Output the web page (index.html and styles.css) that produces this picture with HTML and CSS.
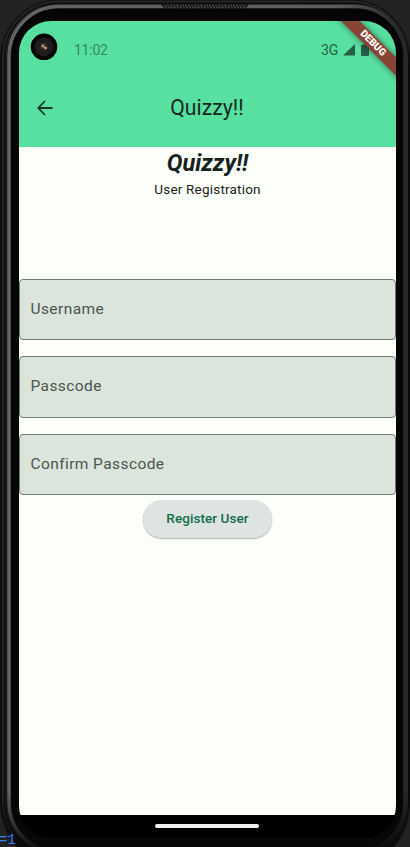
FILE: index.html
```html
<!DOCTYPE html>
<html lang="en">
<head>
<meta charset="utf-8">
<title>Quizzy!!</title>
<link rel="stylesheet" href="styles.css">
</head>
<body>
<div class="device">
  <svg class="frame" width="410" height="847" viewBox="0 0 410 847" fill="none">
    <defs>
      <linearGradient id="rim" gradientUnits="userSpaceOnUse" x1="0" y1="0" x2="398" y2="0">
        <stop offset="0" stop-color="#646464"/>
        <stop offset=".85" stop-color="#5c5c5c"/>
        <stop offset="1" stop-color="#272727"/>
      </linearGradient>
      <linearGradient id="fade" x1="0" y1="0" x2="0" y2="1">
        <stop offset="0" stop-color="#080808" stop-opacity="0"/>
        <stop offset="1" stop-color="#080808" stop-opacity=".9"/>
      </linearGradient>
    </defs>
    <rect x="0.5" y="-0.5" width="409" height="862" rx="59" fill="#080808" stroke="#111"/>
    <rect x="3" y="1.500" width="404" height="857" rx="56" stroke="#262626" stroke-width="2"/>
    <rect x="6" y="4.500" width="399" height="850" rx="52" stroke="#222" stroke-width="1.500"/>
    <rect x="9" y="6.500" width="396" height="846" rx="50" stroke="url(#rim)" stroke-width="3.500"/>
    <rect x="11.500" y="9" width="391" height="841" rx="47" fill="#050505"/>
    <path d="M1 790h408v12a59 59 0 0 1-15 45H17A59 59 0 0 1 1 802z" fill="url(#fade)"/>
    <path d="M160 3h90l-5 6h-80z" fill="#101010"/>
    <path d="M164 5.500h82M165 7.500h80" stroke="#484848" stroke-width="1.300" stroke-dasharray="2 1"/>
  </svg>
  <span class="backdrop-text">=1</span>
  <main class="screen">
    <header class="top">
      <div class="status">
        <svg class="camera" width="28" height="28" viewBox="0 0 28 28">
          <circle cx="14" cy="13.800" r="13.300" fill="#050505"/>
          <circle cx="14" cy="13.800" r="9.500" fill="#1c1c1c"/>
          <circle cx="14" cy="13.800" r="4.500" fill="#30241f"/>
          <circle cx="13" cy="13" r="1.800" fill="#a18a7c"/>
          <circle cx="15.500" cy="15" r="1.300" fill="#d9b8a0"/>
        </svg>
        <span class="clock">11:02</span>
        <span class="network">3G</span>
        <svg class="signals" width="30" height="14" viewBox="0 0 30 14" fill="#265f46">
          <path d="M0 12.500 12 1v11.500zM18 3a1 1 0 0 1 1-1h1.500V1h3v1H25a1 1 0 0 1 1 1v9a1 1 0 0 1-1 1h-6a1 1 0 0 1-1-1z"/>
        </svg>
      </div>
      <div class="appbar">
        <svg class="back" width="16" height="16" viewBox="0 0 16 16" fill="none" stroke="#19382b" stroke-width="1.800">
          <path d="M15.500 8H2M8 1 1.300 8 8 15"/>
        </svg>
        <h1 class="title">Quizzy!!</h1>
      </div>
      <div class="ribbon">DEBUG</div>
    </header>
    <section class="content">
      <h2 class="brand">Quizzy!!</h2>
      <p class="subtitle">User Registration</p>
      <form class="form">
        <div class="field">Username</div>
        <div class="field">Passcode</div>
        <div class="field">Confirm Passcode</div>
        <button class="register" type="button">Register User</button>
      </form>
    </section>
    <footer class="navbar"><div class="handle"></div></footer>
  </main>
</div>
</body>
</html>
```
FILE: styles.css
```css
* { box-sizing: border-box; }
body { margin: 0; background: #222; font-family: Roboto, sans-serif; overflow: hidden; }
h1, h2, p { margin: 0; }
.device { position: relative; width: 410px; height: 847px; padding: 21px 14px 0 19px; overflow: hidden; }
.frame { position: absolute; left: 0; top: 0; }
.backdrop-text { position: absolute; left: -1px; top: 831px; font: 14px/19px "Liberation Mono", monospace; color: #2d84f0; }
.screen { position: relative; width: 377px; height: 817px; border-radius: 32px; overflow: hidden; background: #000; display: flex; flex-direction: column; }
.top { position: relative; height: 126px; flex: none; background: #58e0a0; overflow: hidden; }
.status { height: 52px; display: flex; align-items: center; padding-left: 11px; }
.camera { flex: none; }
.clock { margin: 6px 0 0 16px; font-size: 14px; line-height: 16px; letter-spacing: -.25px; color: #348760; width: 34px; white-space: nowrap; }
.network { margin: 5px 0 0 213px; font-size: 14px; line-height: 16px; color: #265f46; width: 20px; }
.signals { margin: 5px 0 0 2px; flex: none; }
.appbar { height: 70px; display: flex; align-items: center; padding-left: 18px; }
.back { flex: none; }
.title { width: 308px; text-align: center; font-size: 21.200px; line-height: 28px; font-weight: 400; color: #19291f; }
.ribbon { position: absolute; width: 120px; height: 12.500px; left: 293.500px; top: 15.500px; transform: rotate(45deg); background: #8a4436; box-shadow: 0 0 6px rgba(0,0,0,.5); color: #fff; font-size: 10px; line-height: 12.500px; font-weight: 900; text-align: center; }
.content { flex: 1; background: #fbfef9; }
.brand { padding-top: 2px; text-align: center; font-size: 23.500px; line-height: 28px; font-weight: 700; font-style: italic; color: #18211d; }
.subtitle { margin-top: 3px; text-align: center; font-size: 13.500px; line-height: 18px; letter-spacing: .2px; color: #1d2420; }
.form { margin-top: 80.500px; display: flex; flex-direction: column; align-items: center; }
.field { width: 377px; height: 61.500px; margin-bottom: 16px; padding: 0 10.500px; border: 1px solid #717a74; border-radius: 4px; background: #dbe5dc; color: #4b544e; font-size: 15.500px; line-height: 59.500px; letter-spacing: .41px; }
.register { width: 129px; height: 38px; margin-top: -11.400px; padding: 0; border: 0; border-radius: 19px; background: #dde4e1; box-shadow: 0 1px 1.500px rgba(0,0,0,.3); font: 500 13.500px/37px Roboto, sans-serif; letter-spacing: .07px; color: #146c4a; }
.navbar { height: 23px; flex: none; padding: 9px 1px 0 0; display: flex; justify-content: center; align-items: flex-start; background: #000; }
.handle { width: 104px; height: 4px; border-radius: 2px; background: #f2efef; }
```
